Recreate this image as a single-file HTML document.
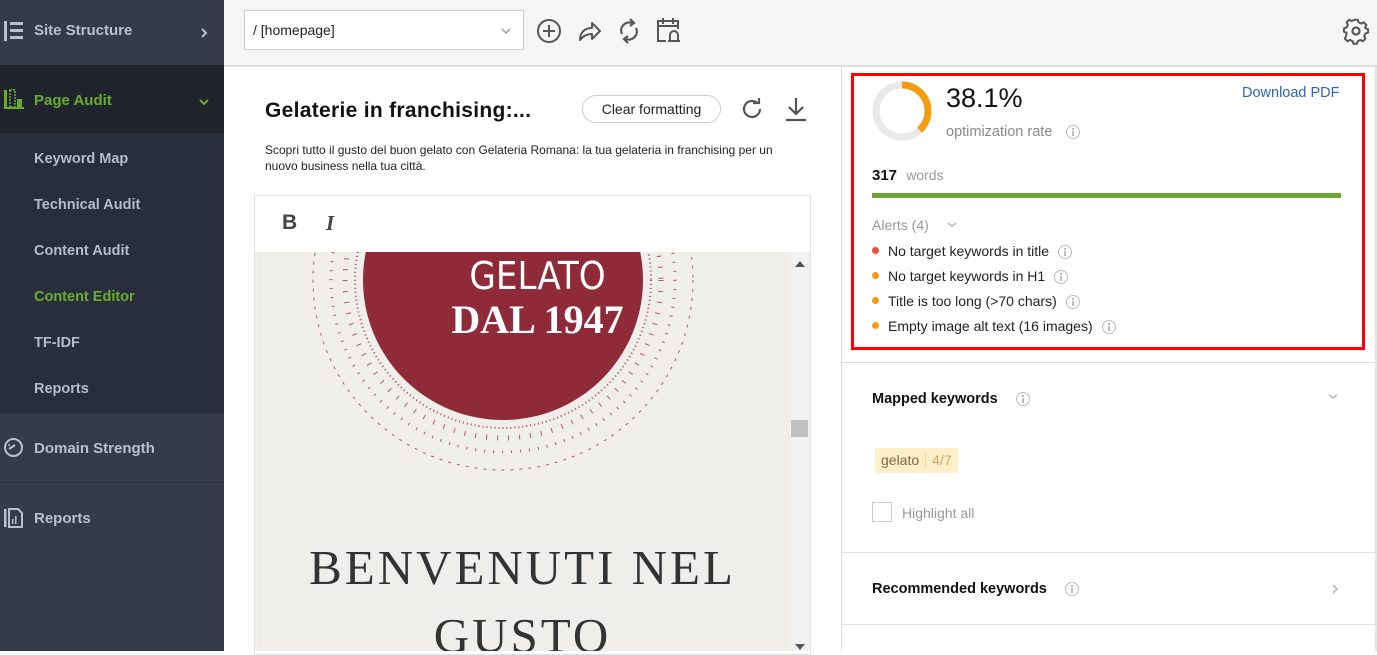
<!DOCTYPE html>
<html><head><meta charset="utf-8"><style>
*{box-sizing:border-box;margin:0;padding:0}
body{width:1377px;height:651px;overflow:hidden;font-family:"Liberation Sans",sans-serif;background:#fff;position:relative}
.abs{position:absolute}
.sb{left:0;top:0;width:224px;height:651px;background:#353b48}
.sbi{position:absolute;left:34px;font-size:15px;font-weight:bold;color:#b9c0cc}
.sub{position:absolute;left:34px;font-size:14.5px;font-weight:bold;color:#b5bcc8}
.info{display:inline-block;width:14px;height:14px;border:1.3px solid #bbb;border-radius:50%;position:relative;vertical-align:middle}
.info:before{content:"";position:absolute;left:5px;top:2px;width:2px;height:2px;background:#bbb}
.info:after{content:"";position:absolute;left:5px;top:5px;width:2px;height:5px;background:#bbb}
.al{position:absolute;left:888px;font-size:14px;color:#222}
.dot{position:absolute;left:872px;width:7px;height:7px;border-radius:50%;background:#f39c12}
</style></head><body>
<div class="abs sb"></div>
<div class="abs" style="left:0;top:65px;width:224px;height:68px;background:#1f242d"></div>
<div class="abs" style="left:0;top:133px;width:224px;height:280px;background:#282e3a"></div>
<div class="abs" style="left:0;top:482px;width:224px;height:1px;background:#2a2f3a"></div>
<svg class="abs" style="left:3px;top:20px" width="22" height="22" viewBox="0 0 22 22"><rect x="1" y="1" width="3" height="20" fill="#b9c0cc"/><rect x="7" y="2" width="13" height="3" fill="#b9c0cc"/><rect x="7" y="9" width="13" height="3" fill="#b9c0cc"/><rect x="7" y="16" width="13" height="3" fill="#b9c0cc"/></svg>
<div class="sbi" style="top:22px">Site Structure</div>
<svg class="abs" style="left:200px;top:27px" width="8" height="12"><path d="M2 2l4 4-4 4" stroke="#b9c0cc" stroke-width="2" fill="none"/></svg>
<svg class="abs" style="left:3px;top:89px" width="22" height="22" viewBox="0 0 22 22"><rect x="1" y="1" width="3" height="19" fill="#6aad2e"/><rect x="7" y="1" width="5" height="17" fill="none" stroke="#6aad2e" stroke-width="1.5" stroke-dasharray="2 1"/><rect x="14" y="10" width="5" height="8" fill="#6aad2e"/><rect x="1" y="18" width="20" height="2" fill="#6aad2e"/></svg>
<div class="sbi" style="top:92px;color:#6aad2e">Page Audit</div>
<svg class="abs" style="left:198px;top:98px" width="12" height="8"><path d="M2 2l4 4 4-4" stroke="#6aad2e" stroke-width="2" fill="none"/></svg>
<div class="sub" style="top:151px">Keyword Map</div>
<div class="sub" style="top:197px">Technical Audit</div>
<div class="sub" style="top:243px">Content Audit</div>
<div class="sub" style="top:289px;color:#6aad2e">Content Editor</div>
<div class="sub" style="top:335px">TF-IDF</div>
<div class="sub" style="top:381px">Reports</div>
<svg class="abs" style="left:3px;top:437px" width="21" height="21" viewBox="0 0 21 21"><circle cx="10.5" cy="10.5" r="8.5" fill="none" stroke="#b9c0cc" stroke-width="2"/><path d="M6 12l6-4" stroke="#b9c0cc" stroke-width="2"/><circle cx="6" cy="8" r="1" fill="#b9c0cc"/></svg>
<div class="sbi" style="top:440px">Domain Strength</div>
<svg class="abs" style="left:3px;top:507px" width="22" height="22" viewBox="0 0 22 22"><rect x="1" y="2" width="2.5" height="18" fill="#b9c0cc"/><path d="M6 2h9l4 4v14H6z" fill="none" stroke="#b9c0cc" stroke-width="2"/><rect x="9" y="12" width="1.5" height="5" fill="#b9c0cc"/><rect x="12" y="9" width="1.5" height="8" fill="#b9c0cc"/></svg>
<div class="sbi" style="top:510px">Reports</div>

<div class="abs" style="left:224px;top:0;width:1153px;height:67px;background:#f5f5f5;border-bottom:2px solid #ddd"></div>
<div class="abs" style="left:244px;top:10px;width:280px;height:40px;background:#fff;border:1px solid #ccc;font-size:14px;color:#222;padding:11px 8px">/ [homepage]</div>
<svg class="abs" style="left:500px;top:27px" width="12" height="8"><path d="M2 2l4 4 4-4" stroke="#999" stroke-width="1.5" fill="none"/></svg>
<svg class="abs" style="left:536px;top:18px" width="26" height="26" viewBox="0 0 26 26"><circle cx="13" cy="13" r="11" fill="none" stroke="#555" stroke-width="2"/><path d="M13 7v12M7 13h12" stroke="#555" stroke-width="2"/></svg>
<svg class="abs" style="left:577px;top:18px" width="26" height="26" viewBox="0 0 26 26"><path d="M3 22c0-8 5-12 12-12V5l8 8-8 8v-5c-5 0-9 2-12 6z" fill="none" stroke="#555" stroke-width="2" stroke-linejoin="round"/></svg>
<svg class="abs" style="left:617px;top:17px" width="24" height="28" viewBox="0 0 24 28"><path d="M5 17a8 8 0 0 1 10-11M19 11a8 8 0 0 1-10 11" fill="none" stroke="#555" stroke-width="2.2"/><path d="M13 2l4 4-4 3M11 26l-4-4 4-3" fill="none" stroke="#555" stroke-width="2.2"/></svg>
<svg class="abs" style="left:655px;top:15px" width="30" height="30" viewBox="0 0 30 30"><path d="M11 26H3V6h20v8" fill="none" stroke="#555" stroke-width="2"/><path d="M3 11h20M8 3v6M18 3v6" stroke="#555" stroke-width="2"/><path d="M15 26v-6a4 4 0 0 1 8 0v6zM13 26h12" fill="none" stroke="#555" stroke-width="2"/></svg>
<svg class="abs" style="left:1342px;top:17px" width="28" height="28" viewBox="0 0 28 28"><path d="M12 2h4l1 3 3 1.5 3-1.5 3 3-1.5 3L25 12l3 1v4l-3 1-1.5 3 1.5 3-3 3-3-1.5-3 1.5-1 3h-4l-1-3-3-1.5-3 1.5-3-3 1.5-3L3 17l-3-1v-4l3-1 1.5-3L3 5l3-3 3 1.5L12 2z" transform="translate(2 1) scale(.86)" fill="none" stroke="#555" stroke-width="2.3" stroke-linejoin="round"/><circle cx="14" cy="14" r="3.5" fill="none" stroke="#555" stroke-width="2.2"/></svg>

<div class="abs" style="left:265px;top:99px;font-size:21px;font-weight:bold;color:#111;letter-spacing:.3px">Gelaterie in franchising:...</div>
<div class="abs" style="left:582px;top:95px;width:139px;height:28px;border:1px solid #ccc;border-radius:14px;font-size:14px;color:#222;text-align:center;line-height:26px">Clear formatting</div>
<svg class="abs" style="left:740px;top:97px" width="24" height="24" viewBox="0 0 24 24"><path d="M20 12a8 8 0 1 1-3-6.3" fill="none" stroke="#555" stroke-width="2.2"/><path d="M13 5h6V0" fill="none" stroke="#555" stroke-width="2.2" transform="translate(0 1)"/></svg>
<svg class="abs" style="left:784px;top:96px" width="24" height="26" viewBox="0 0 24 26"><path d="M12 2v16M5 11l7 7 7-7M2 24h20" fill="none" stroke="#555" stroke-width="2.2"/></svg>
<div class="abs" style="left:265px;top:142px;width:540px;font-size:12px;line-height:16px;color:#222">Scopri tutto il gusto del buon gelato con Gelateria Romana: la tua gelateria in franchising per un nuovo business nella tua città.</div>
<div class="abs" style="left:254px;top:195px;width:557px;height:460px;border:1px solid #e3e3e3"></div>
<div class="abs" style="left:282px;top:211px;font-size:21px;font-weight:bold;color:#444">B</div>
<div class="abs" style="left:326px;top:211px;font-size:21px;font-weight:bold;font-style:italic;color:#444;font-family:'Liberation Serif',serif">I</div>
<div class="abs" style="left:255px;top:252px;width:535px;height:399px;background:#efeeea;overflow:hidden">
<svg width="535" height="399" style="position:absolute;left:0;top:0">
<circle cx="248" cy="28" r="190" fill="none" stroke="#9b3a4a" stroke-width="1" stroke-dasharray="3 6" opacity=".8"/>
<circle cx="248" cy="28" r="172" fill="none" stroke="#9b3a4a" stroke-width="3" stroke-dasharray="1 8" opacity=".8"/>
<circle cx="248" cy="28" r="158" fill="none" stroke="#9b3a4a" stroke-width="5" stroke-dasharray="1 10" opacity=".8"/>
<circle cx="248" cy="28" r="148" fill="none" stroke="#9b3a4a" stroke-width="2" stroke-dasharray="1 3" opacity=".9"/>
<circle cx="248" cy="28" r="140" fill="#8f2a38"/>
<line x1="5" y1="0" x2="5" y2="399" stroke="#e4e2dc"/>
</svg>
<div style="position:absolute;left:0;width:535px;top:2px;text-align:center;font-size:38px;color:#fff;padding-left:30px;font-family:'DejaVu Sans Condensed','DejaVu Sans',sans-serif">GELATO</div>
<div style="position:absolute;left:0;width:535px;top:44px;text-align:center;font-size:40px;color:#fff;font-weight:bold;padding-left:30px;font-family:'Liberation Serif',serif">DAL 1947</div>
<div style="position:absolute;left:0;width:535px;top:282px;text-align:center;font-size:49px;color:#333;letter-spacing:3px;font-family:'Liberation Serif',serif;line-height:68px">BENVENUTI NEL<br>GUSTO</div>
</div>
<div class="abs" style="left:790px;top:252px;width:20px;height:399px;background:#f1f1f1"></div>
<div class="abs" style="left:791px;top:420px;width:17px;height:17px;background:#c1c1c1"></div>
<svg class="abs" style="left:795px;top:261px" width="10" height="6"><path d="M0 6L5 0L10 6z" fill="#555"/></svg>
<svg class="abs" style="left:795px;top:644px" width="10" height="6"><path d="M0 0L5 6L10 0z" fill="#555"/></svg>

<div class="abs" style="left:841px;top:67px;width:1px;height:584px;background:#ddd"></div>
<div class="abs" style="left:1375px;top:67px;width:2px;height:584px;background:#e3e3e3"></div>
<div class="abs" style="left:851px;top:73px;width:514px;height:277px;border:3px solid #f00"></div>
<svg class="abs" style="left:871px;top:80px" width="62" height="62" viewBox="0 0 62 62"><circle cx="31" cy="31" r="26" fill="none" stroke="#e9e9e9" stroke-width="7"/><circle cx="31" cy="31" r="26" fill="none" stroke="#f39c12" stroke-width="7" stroke-dasharray="62.3 200" transform="rotate(-90 31 31)"/></svg>
<div class="abs" style="left:946px;top:83px;font-size:27px;color:#111">38.1%</div>
<div class="abs" style="left:946px;top:124px;font-size:14.5px;color:#888">optimization rate <span class="info" style="margin-left:10px"></span></div>
<div class="abs" style="left:1242px;top:85px;font-size:14.5px;color:#2a67b1">Download PDF</div>
<div class="abs" style="left:872px;top:167px;font-size:15px;color:#111;font-weight:bold">317 <span style="font-weight:normal;color:#999;font-size:14px;margin-left:5px">words</span></div>
<div class="abs" style="left:872px;top:193px;width:469px;height:5px;background:#6aa535"></div>
<div class="abs" style="left:872px;top:217px;font-size:14px;color:#999">Alerts (4)</div>
<svg class="abs" style="left:946px;top:221px" width="12" height="8"><path d="M2 2l4 3 4-3" stroke="#bbb" stroke-width="1.5" fill="none"/></svg>
<div class="dot" style="top:247px;background:#ea4e3d"></div><div class="al" style="top:243px">No target keywords in title <span class="info" style="margin-left:5px"></span></div>
<div class="dot" style="top:272px"></div><div class="al" style="top:268px">No target keywords in H1 <span class="info" style="margin-left:5px"></span></div>
<div class="dot" style="top:297px"></div><div class="al" style="top:293px">Title is too long (&gt;70 chars) <span class="info" style="margin-left:5px"></span></div>
<div class="dot" style="top:322px"></div><div class="al" style="top:318px">Empty image alt text (16 images) <span class="info" style="margin-left:5px"></span></div>
<div class="abs" style="left:842px;top:362px;width:533px;height:1px;background:#ddd"></div>
<div class="abs" style="left:872px;top:391px;font-size:14.5px;font-weight:bold;color:#111">Mapped keywords <span class="info" style="margin-left:14px"></span></div>
<svg class="abs" style="left:1327px;top:393px" width="12" height="8"><path d="M2 2l4 3 4-3" stroke="#bbb" stroke-width="1.5" fill="none"/></svg>
<div class="abs" style="left:875px;top:448px;height:25px;background:#fdf0c8;font-size:14px;line-height:25px;color:#7a6a50"><span style="padding:0 6px">gelato</span><span style="border-left:1px solid #f0d9a0;padding:0 6px;color:#c9a66b">4/7</span></div>
<div class="abs" style="left:872px;top:502px;width:20px;height:20px;border:1px solid #ccc"></div>
<div class="abs" style="left:902px;top:505px;font-size:14px;color:#999">Highlight all</div>
<div class="abs" style="left:842px;top:552px;width:533px;height:1px;background:#e3e3e3"></div>
<div class="abs" style="left:872px;top:581px;font-size:14.5px;font-weight:bold;color:#111">Recommended keywords <span class="info" style="margin-left:14px"></span></div>
<svg class="abs" style="left:1331px;top:583px" width="8" height="12"><path d="M2 2l4 4-4 4" stroke="#bbb" stroke-width="1.8" fill="none"/></svg>
<div class="abs" style="left:842px;top:624px;width:533px;height:1px;background:#e3e3e3"></div>
</body></html>
